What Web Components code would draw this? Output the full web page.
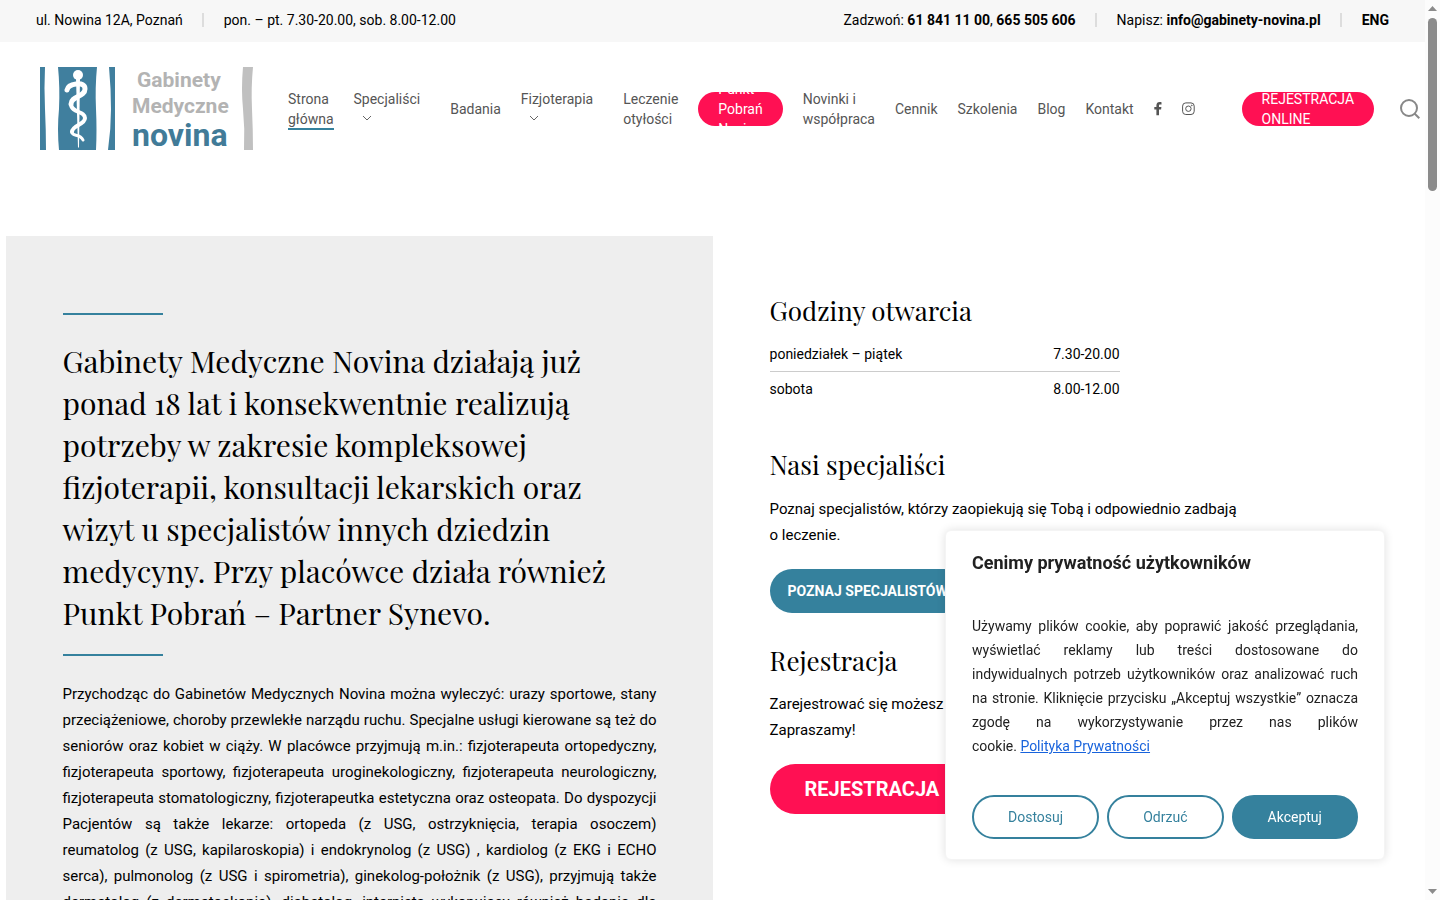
<!DOCTYPE html>
<html lang="pl">
<head>
<meta charset="utf-8">
<title>Gabinety Medyczne Novina</title>
<style>
  :root{
    --blue: #35819d;
    --pink: #ff1053;
    --serif: "Playfair Display", "Liberation Serif", serif;
  }
  body{
    margin: 0;
    display: flex;
    height: 100vh;
    overflow: hidden;
    background: #fff;
    color: #000;
    font-family: Roboto, "Liberation Sans", sans-serif;
    font-size: 15px;
    line-height: 26px;
  }
</style>
</head>
<body>
<novina-page></novina-page>
<scroll-rail></scroll-rail>
<cookie-notice></cookie-notice>

<script>
class TopBar extends HTMLElement{
    constructor(){
        super();
        this.attachShadow({mode: "open"});
    }

    connectedCallback(){
        this.shadowRoot.innerHTML = `
        <style>
        :host{
            display: flex;
            justify-content: space-between;
            align-items: center;
            padding: 10px 36px 12px;
            background: #f7f7f7;
            font-size: 14px;
            line-height: 20px;
        }
        .group{
            display: flex;
            align-items: center;
        }
        .group > span + span{
            margin-left: 19px;
            padding-left: 22px;
            background: linear-gradient(#ddd, #ddd) left center / 2px 14px no-repeat;
        }
        a{
            color: inherit;
            font-weight: 700;
            text-decoration: none;
        }
        </style>
        <div class="group">
            <span>ul. Nowina 12A, Poznań</span>
            <span>pon. – pt. 7.30-20.00, sob. 8.00-12.00</span>
        </div>
        <div class="group">
            <span>Zadzwoń: <a href="tel:618411100">61 841 11 00</a>, <a href="tel:665505606">665 505 606</a></span>
            <span>Napisz: <a href="mailto:info@gabinety-novina.pl">info@gabinety-novina.pl</a></span>
            <span><a href="#eng">ENG</a></span>
        </div>
        `;
    }
}

class NovinaLogo extends HTMLElement{
    constructor(){
        super();
        this.attachShadow({mode: "open"});
    }

    connectedCallback(){
        this.shadowRoot.innerHTML = `
        <style>
        :host{ display: block; }
        a, svg{ display: block; }
        text{
            font-family: Roboto, "Liberation Sans", sans-serif;
            font-weight: 700;
            fill: #b3b3b3;
        }
        .name{ fill: #417b98; }
        </style>
        <a href="#home" aria-label="Gabinety Medyczne Novina">
        <svg width="213" height="83" viewBox="0 0 213 83">
            <g fill="#407f9e">
                <path d="M0 0H5Q4 20 5 42T6 83H0Z"/>
                <path d="M18 0H57Q55 20 56 42T56 83H19Q17 62 19 42Q20 20 18 0Z"/>
                <path d="M69 0H75V83H68Q71 62 71 42T69 0Z"/>
            </g>
            <path fill="#c0c0c0" d="M203 0H213Q211 20 212 42T213 83H204Q205 62 203 42T203 0Z"/>
            <circle cx="38" cy="8" r="5" fill="#fff"/>
            <path fill="#fff" d="M36 11H40L39 80L38 81Z"/>
            <g fill="none" stroke="#fff" stroke-linecap="round" stroke-linejoin="round">
                <path stroke-width="5" d="M27 23Q28 18 36 17Q45 16 45 22C45 30 31 29 31 37"/>
                <path stroke-width="4" d="M31 37C31 46 45 44 45 51C45 58 32 58 32 65"/>
                <path stroke-width="3" d="M32 65C32 70 40 66 43 73"/>
            </g>
            <text x="97" y="20" font-size="21">Gabinety</text>
            <text x="92" y="46" font-size="21">Medyczne</text>
            <text class="name" x="92" y="79" font-size="32">novina</text>
        </svg>
        </a>
        `;
    }
}

class SiteHeader extends HTMLElement{
    constructor(){
        super();
        this.attachShadow({mode: "open"});
    }

    connectedCallback(){
        this.shadowRoot.innerHTML = `
        <style>
        :host{
            display: flex;
            align-items: center;
            padding: 25px 5px 26px 40px;
            font-size: 14px;
            line-height: 20px;
        }
        nav{
            display: flex;
            align-items: center;
            gap: 20px;
            margin-left: 35px;
            white-space: nowrap;
        }
        a{
            color: #555;
            text-decoration: none;
        }
        .current span{
            padding-bottom: 1px;
            border-bottom: 2px solid var(--blue);
        }
        .more{ padding-right: 10px; }
        .more svg{
            display: block;
            margin: 4px 0 6px 8px;
        }
        svg{ display: block; }
        .insta{ margin-right: 27px; }
        .pill{
            display: flex;
            align-items: center;
            height: 34px;
            padding: 0 20px;
            border-radius: 17px;
            overflow: hidden;
            background: var(--pink);
            color: #fff;
        }
        button{
            margin-left: auto;
            padding: 0;
            border: 0;
            background: none;
        }
        </style>
        <novina-logo></novina-logo>
        <nav>
            <a class="current" href="#home">Strona<br><span>główna</span></a>
            <a class="more" href="#specjalisci">Specjaliści
                <svg width="10" height="10" viewBox="0 0 10 10" fill="none" stroke="#666"><path d="M1 3L5 7L9 3"/></svg></a>
            <a href="#badania">Badania</a>
            <a class="more" href="#fizjoterapia">Fizjoterapia
                <svg width="10" height="10" viewBox="0 0 10 10" fill="none" stroke="#666"><path d="M1 3L5 7L9 3"/></svg></a>
            <a href="#leczenie">Leczenie<br>otyłości</a>
            <a class="pill" href="#punkt">Punkt<br>Pobrań<br>Novina</a>
            <a href="#novinki">Novinki i<br>współpraca</a>
            <a href="#cennik">Cennik</a>
            <a href="#szkolenia">Szkolenia</a>
            <a href="#blog">Blog</a>
            <a href="#kontakt">Kontakt</a>
            <a href="#facebook" aria-label="Facebook">
                <svg width="8" height="14" viewBox="0 0 8 14" fill="#555"><path d="M7.5 0.2V2.4H6.2C5.2 2.4 5 2.9 5 3.6V5.1H7.4L7.1 7.5H5V13.2H2.4V7.5H0.3V5.1H2.4V3.3C2.4 1.2 3.7 0 5.6 0C6.5 0 7.2 0.1 7.5 0.2Z"/></svg></a>
            <a class="insta" href="#instagram" aria-label="Instagram">
                <svg width="13" height="14" viewBox="0 0 13 14" fill="none" stroke="#555"><rect x="0.6" y="0.9" width="11.6" height="11.6" rx="3.2"/><circle cx="6.4" cy="6.7" r="2.7"/><circle cx="9.8" cy="3.4" r="0.4"/></svg></a>
            <a class="pill" href="#rejestracja">REJESTRACJA<br>ONLINE</a>
        </nav>
        <button type="button" aria-label="Szukaj">
            <svg width="20" height="22" viewBox="0 0 20 22" fill="none" stroke="#888" stroke-width="2"><circle cx="9" cy="10" r="8"/><path d="M14.5 15.5L19.3 20.3"/></svg>
        </button>
        `;

        //wrap the text of each pill so that its lines stay in one block
        this.shadowRoot.querySelectorAll(".pill").forEach(pill => {
            const text = document.createElement("span");
            text.append(...pill.childNodes);
            pill.appendChild(text);
        });
    }
}

class IntroPanel extends HTMLElement{
    constructor(){
        super();
        this.attachShadow({mode: "open"});
    }

    connectedCallback(){
        this.shadowRoot.innerHTML = `
        <style>
        :host{
            display: block;
            padding: 77px 8%;
            background: #eee;
        }
        hr{
            width: 100px;
            height: 2px;
            margin: 0;
            border: 0;
            background: var(--blue);
        }
        h1{
            margin: 25px 0 20px;
            font-family: var(--serif);
            font-size: 30px;
            font-weight: 400;
            line-height: 42px;
        }
        p{
            margin: 25px 0 0;
            text-align: justify;
        }
        </style>
        <hr>
        <h1><slot name="title"></slot></h1>
        <hr>
        <p><slot></slot></p>
        `;
    }
}

class OpeningHours extends HTMLElement{
    constructor(){
        super();
        this.attachShadow({mode: "open"});
    }

    connectedCallback(){
        this.shadowRoot.innerHTML = `
        <style>
        :host{
            display: block;
            max-width: 350px;
        }
        table{
            width: 100%;
            border-collapse: collapse;
            font-size: 14px;
            line-height: 20px;
        }
        th, td{
            padding: 7px 0;
            font-weight: 400;
            text-align: left;
        }
        td{ text-align: right; }
        tr + tr > *{ border-top: 1px solid #ccc; }
        </style>
        <table>
            <tr><th scope="row">poniedziałek – piątek</th><td>7.30-20.00</td></tr>
            <tr><th scope="row">sobota</th><td>8.00-12.00</td></tr>
        </table>
        `;
    }
}

class InfoBlock extends HTMLElement{
    constructor(){
        super();
        this.attachShadow({mode: "open"});
    }

    connectedCallback(){
        this.shadowRoot.innerHTML = `
        <style>
        :host{ display: block; }
        h2{
            margin: 0 0 var(--title-gap, 13px);
            font-family: var(--serif);
            font-size: 26px;
            font-weight: 400;
            line-height: 36px;
        }
        ::slotted(p){
            max-width: 500px;
            margin: 0 0 21px;
        }
        </style>
        <h2>${this.getAttribute("heading")}</h2>
        <slot></slot>
        `;
    }
}

class PillLink extends HTMLElement{
    constructor(){
        super();
        this.attachShadow({mode: "open"});
    }

    connectedCallback(){
        this.shadowRoot.innerHTML = `
        <style>
        :host{ display: flex; }
        a{
            padding: 12px 18px;
            border-radius: 25px;
            background: var(--blue);
            color: #fff;
            font-size: 14px;
            font-weight: 700;
            line-height: 20px;
            text-decoration: none;
        }
        :host([big]) a{
            padding: 12px 35px;
            background: var(--pink);
            font-size: 20px;
            line-height: 26px;
        }
        </style>
        <a href="${this.getAttribute("href")}"><slot></slot></a>
        `;
    }
}

class NovinaPage extends HTMLElement{
    constructor(){
        super();
        this.attachShadow({mode: "open"});
    }

    connectedCallback(){
        this.shadowRoot.innerHTML = `
        <style>
        :host{
            display: block;
            flex: 1;
            min-width: 0;
            overflow-y: auto;
            scrollbar-width: none;
        }
        main{
            display: grid;
            grid-template-columns: 1fr 1fr;
            padding: 60px 5px 0 6px;
        }
        .side{
            display: flex;
            flex-direction: column;
            padding: 57px 8%;
        }
        .hours{
            --title-gap: 8px;
            margin-bottom: 41px;
        }
        .team{ margin-bottom: 30px; }
        .signup{ --title-gap: 12px; }
        </style>
        <top-bar></top-bar>
        <site-header></site-header>
        <main>
            <intro-panel>
                <span slot="title">Gabinety Medyczne Novina działają już ponad 18 lat i konsekwentnie realizują potrzeby w zakresie kompleksowej fizjoterapii, konsultacji lekarskich oraz wizyt u specjalistów innych dziedzin medycyny. Przy placówce działa również Punkt Pobrań – Partner Synevo.</span>
                Przychodząc do Gabinetów Medycznych Novina można wyleczyć: urazy sportowe, stany przeciążeniowe, choroby przewlekłe narządu ruchu. Specjalne usługi kierowane są też do seniorów oraz kobiet w ciąży. W placówce przyjmują m.in.: fizjoterapeuta ortopedyczny, fizjoterapeuta sportowy, fizjoterapeuta uroginekologiczny, fizjoterapeuta neurologiczny, fizjoterapeuta stomatologiczny, fizjoterapeutka estetyczna oraz osteopata. Do dyspozycji Pacjentów są także lekarze: ortopeda (z USG, ostrzyknięcia, terapia osoczem) reumatolog (z USG, kapilaroskopia) i endokrynolog (z USG) , kardiolog (z EKG i ECHO serca), pulmonolog (z USG i spirometria), ginekolog-położnik (z USG), przyjmują także dermatolog (z dermatoskopią), diabetolog, internista wykonujący również badania dla kierowców.
            </intro-panel>
            <div class="side">
                <info-block class="hours" heading="Godziny otwarcia">
                    <opening-hours></opening-hours>
                </info-block>
                <info-block class="team" heading="Nasi specjaliści">
                    <p>Poznaj specjalistów, którzy zaopiekują się Tobą i odpowiednio zadbają o&nbsp;leczenie.</p>
                    <pill-link href="#specjalisci">POZNAJ SPECJALISTÓW</pill-link>
                </info-block>
                <info-block class="signup" heading="Rejestracja">
                    <p>Zarejestrować się możesz online.<br>Zapraszamy!</p>
                    <pill-link big href="#rejestracja">REJESTRACJA</pill-link>
                </info-block>
            </div>
        </main>
        `;
    }
}

class ScrollRail extends HTMLElement{
    constructor(){
        super();
        this.attachShadow({mode: "open"});
    }

    connectedCallback(){
        this.shadowRoot.innerHTML = `
        <style>
        :host{
            display: flex;
            flex-direction: column;
            align-items: center;
            width: 15px;
            padding: 6px 0;
            box-sizing: border-box;
            background: #fcfcfc;
        }
        svg{ flex: none; }
        .thumb{
            width: 9px;
            height: 173px;
            margin: 7px 0 auto;
            border-radius: 5px;
            background: #8b8b8b;
        }
        </style>
        <svg width="9" height="5" fill="#8b8b8b"><path d="M0 5L4.5 0L9 5Z"/></svg>
        <div class="thumb"></div>
        <svg width="9" height="5" fill="#8b8b8b"><path d="M0 0H9L4.5 5Z"/></svg>
        `;
    }
}

class CookieNotice extends HTMLElement{
    constructor(){
        super();
        this.attachShadow({mode: "open"});
    }

    connectedCallback(){
        this.shadowRoot.innerHTML = `
        <style>
        :host{
            position: fixed;
            right: 55px;
            bottom: 40px;
            width: 440px;
            padding: 19px 26px 20px;
            box-sizing: border-box;
            border: 1px solid #f4f4f4;
            border-radius: 6px;
            background: #fff;
            box-shadow: 0 0 10px rgba(0, 0, 0, .12);
            color: #212121;
            font-size: 14px;
            line-height: 24px;
        }
        h3{
            margin: 0 0 38px;
            font-size: 18px;
            font-weight: 700;
            line-height: 26px;
        }
        p{
            margin: 0 0 37px;
            text-align: justify;
        }
        a{ color: #1863dc; }
        .actions{
            display: flex;
            gap: 8px;
        }
        button{
            flex: auto;
            height: 44px;
            padding: 0 34px;
            border: 2px solid var(--blue);
            border-radius: 22px;
            background: #fff;
            color: var(--blue);
            font: inherit;
        }
        .accept{
            background: var(--blue);
            color: #fff;
        }
        </style>
        <h3>Cenimy prywatność użytkowników</h3>
        <p>Używamy plików cookie, aby poprawić jakość przeglądania, wyświetlać reklamy lub treści dostosowane do indywidualnych potrzeb użytkowników oraz analizować ruch na stronie. Kliknięcie przycisku „Akceptuj wszystkie” oznacza zgodę na wykorzystywanie przez nas plików cookie.&nbsp;<a href="#polityka">Polityka&nbsp;Prywatności</a></p>
        <div class="actions">
            <button type="button">Dostosuj</button>
            <button type="button">Odrzuć</button>
            <button type="button" class="accept">Akceptuj</button>
        </div>
        `;

        this.shadowRoot.querySelectorAll("button").forEach(button => {
            button.addEventListener("click", () => this.remove());
        });
    }
}

customElements.define("top-bar", TopBar);
customElements.define("novina-logo", NovinaLogo);
customElements.define("site-header", SiteHeader);
customElements.define("intro-panel", IntroPanel);
customElements.define("opening-hours", OpeningHours);
customElements.define("info-block", InfoBlock);
customElements.define("pill-link", PillLink);
customElements.define("novina-page", NovinaPage);
customElements.define("scroll-rail", ScrollRail);
customElements.define("cookie-notice", CookieNotice);
</script>
</body>
</html>
